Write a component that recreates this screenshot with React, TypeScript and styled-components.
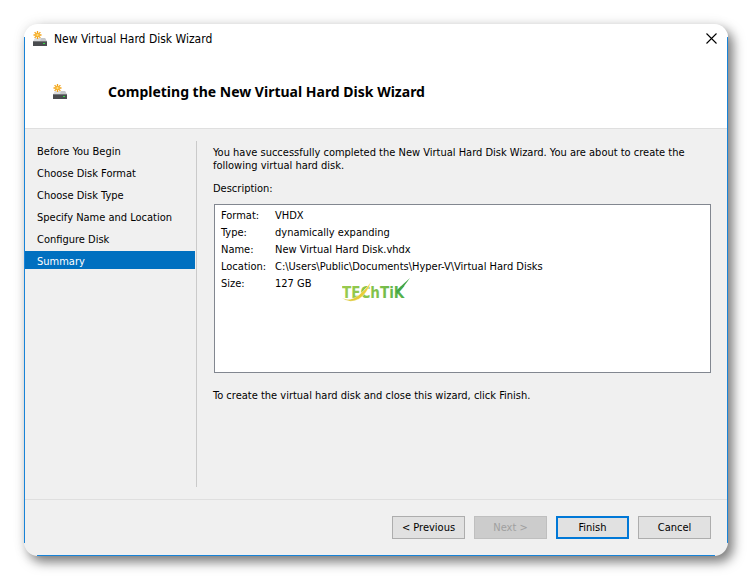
import React from "react";
import styled, { createGlobalStyle, css } from "styled-components";

const GlobalStyle = createGlobalStyle`
  *, *::before, *::after { box-sizing: border-box; }
  html, body, #root { height: 100%; }
  body {
    margin: 0;
    background: #fff;
    color: #000;
    font: 11px/13px "DejaVu Sans Condensed", "Noto Sans", sans-serif;
  }
`;

const Desktop = styled.div`
  display: flex;
  min-height: 100%;
  padding: 24px;
`;

const edge = css`
  content: "";
  position: absolute;
  pointer-events: none;
`;

const Dialog = styled.main`
  position: relative;
  flex: 1;
  display: flex;
  flex-direction: column;
  padding: 0 1px 1px;
  background: #f0f0f0;
  border-radius: 14px;
  overflow: hidden;
  box-shadow: 5px 6px 12px rgba(0, 0, 0, 0.5), 0 0 14px rgba(0, 0, 0, 0.08);

  &::before {
    ${edge}
    inset: 13px 0;
    border: solid #1883d7;
    border-width: 0 1px;
  }
  &::after {
    ${edge}
    inset: auto 13px 0;
    height: 1px;
    background: #1883d7;
  }
`;

const Header = styled.header`
  margin: 0 -1px;
  padding: 0 1px;
  background: #fff;
  border-bottom: 1px solid #dfdfdf;
`;

const TitleBar = styled.div`
  display: flex;
  align-items: center;
  gap: 6px;
  height: 30px;
  padding: 0 8px;
  font-size: 12px;
  line-height: 16px;
`;

const CloseButton = styled.button`
  display: flex;
  margin-left: auto;
  padding: 2px 2px 4px;
  border: 0;
  background: none;
`;

const Banner = styled.div`
  display: flex;
  align-items: center;
  gap: 40px;
  height: 74px;
  padding: 2px 28px 0;
`;

const Heading = styled.h1`
  margin: 0;
  font: bold 14px/18px "Noto Sans", "Open Sans", sans-serif;
`;

const Body = styled.div`
  flex: 1;
  display: flex;
  padding: 12px 16px 12px 0;
`;

const Steps = styled.nav`
  width: 172px;
  flex: none;
  display: flex;
  flex-direction: column;
  gap: 4px;
  padding-right: 1px;
  border-right: 1px solid #cacaca;
`;

const Step = styled.a<{ $current?: boolean }>`
  padding: 4px 12px 0;
  line-height: 14px;
  white-space: nowrap;
  text-decoration: none;
  color: ${(p) => (p.$current ? "#fff" : "#000")};
  background: ${(p) => (p.$current ? "#0070c0" : "transparent")};
`;

const Content = styled.section`
  flex: 1;
  padding: 5px 0 0 16px;
`;

const Text = styled.p`
  margin: 0 0 10px;
`;

const SummaryLabel = styled.div`
  margin-bottom: 9px;
`;

const Summary = styled.div`
  position: relative;
  height: 169px;
  margin: 0 0 16px 1px;
  padding: 2px 6px;
  background: #fff;
  border: 1px solid #828790;
`;

const Details = styled.dl`
  display: grid;
  grid-template-columns: 54px 1fr;
  margin: 0;
  line-height: 17px;
`;

const Term = styled.dt``;

const Value = styled.dd`
  margin: 0;
`;

const Watermark = styled.svg`
  position: absolute;
  left: 127px;
  top: 73px;
`;

const Footer = styled.footer`
  display: flex;
  justify-content: flex-end;
  gap: 9px;
  padding: 16px;
  border-top: 1px solid #dfdfdf;
`;

const Button = styled.button<{ $primary?: boolean }>`
  width: 73px;
  height: 23px;
  padding: 0;
  font: inherit;
  color: #000;
  background: #e1e1e1;
  border: ${(p) => (p.$primary ? "2px solid #0078d7" : "1px solid #adadad")};

  &:disabled {
    color: #a0a0a0;
    background: #ccc;
    border-color: #bfbfbf;
  }
`;

function DiskIcon() {
  return (
    <svg width="15" height="17" viewBox="0 1 15 17" aria-hidden="true">
      <path d="M2 8H12L14 11.5H0Z" fill="#dcdddf" />
      <path d="M8 8H12L14 11.5H7Z" fill="#c6c8cb" />
      <rect x="0" y="11" width="14" height="5" rx="0.6" fill="#4a4c4f" />
      <rect x="0" y="11" width="14" height="1" fill="#77797c" />
      <rect x="10" y="13" width="2" height="1" fill="#35e045" />
      <path d="M4.5 1V9M0.5 5H8.5M1.6 2.1L7.4 7.9M7.4 2.1L1.6 7.9" stroke="#f2a31b" strokeWidth="1.3" />
      <circle cx="4.5" cy="5" r="2" fill="#f7b632" />
      <circle cx="4.5" cy="5" r="1" fill="#ffe08a" />
    </svg>
  );
}

const LogoText = styled.text`
  font: bold 15px "DejaVu Sans Condensed", sans-serif;
`;

function Logo() {
  return (
    <Watermark width="70" height="27" viewBox="0 0 70 27" role="img" aria-label="TechTiK">
      <defs>
        <linearGradient id="leaf" x1="0" x2="1">
          <stop offset="0" stopColor="#9acb4e" />
          <stop offset="0.6" stopColor="#7fc04a" />
          <stop offset="1" stopColor="#4fae4a" />
        </linearGradient>
        <linearGradient id="gold" x1="0" x2="1">
          <stop offset="0" stopColor="#d3c22c" />
          <stop offset="1" stopColor="#f3d33e" />
        </linearGradient>
      </defs>
      <LogoText x="0" y="20" fill="url(#leaf)">TEChTiK</LogoText>
      <path d="M54 13Q60 7 68 0Q62 9 55 16Z" fill="#44a648" />
      <path d="M0 20Q8 24 17 17Q24 11 29 4Q25 16 17 21Q7 26 0 20Z" fill="url(#gold)" stroke="#fff" strokeWidth="0.4" />
    </Watermark>
  );
}

const steps = ["Before You Begin", "Choose Disk Format", "Choose Disk Type", "Specify Name and Location", "Configure Disk", "Summary"];

const details = [
  ["Format:", "VHDX"],
  ["Type:", "dynamically expanding"],
  ["Name:", "New Virtual Hard Disk.vhdx"],
  ["Location:", "C:\\Users\\Public\\Documents\\Hyper-V\\Virtual Hard Disks"],
  ["Size:", "127 GB"],
];

export default function App() {
  return (
    <>
      <GlobalStyle />
      <Desktop>
        <Dialog>
          <Header>
            <TitleBar>
              <DiskIcon />
              <span>New Virtual Hard Disk Wizard</span>
              <CloseButton aria-label="Close">
                <svg width="11" height="11" viewBox="0 0 11 11">
                  <path d="M0.5 0.5L10.5 10.5M10.5 0.5L0.5 10.5" stroke="#000" strokeWidth="1.1" />
                </svg>
              </CloseButton>
            </TitleBar>
            <Banner>
              <DiskIcon />
              <Heading>Completing the New Virtual Hard Disk Wizard</Heading>
            </Banner>
          </Header>
          <Body>
            <Steps>
              {steps.map((step) => (
                <Step key={step} href="#" $current={step === "Summary"} aria-current={step === "Summary" ? "step" : undefined}>
                  {step}
                </Step>
              ))}
            </Steps>
            <Content>
              <Text>
                You have successfully completed the New Virtual Hard Disk Wizard. You are about to create the following virtual hard disk.
              </Text>
              <SummaryLabel id="description">Description:</SummaryLabel>
              <Summary role="group" aria-labelledby="description">
                <Details>
                  {details.map(([term, value]) => (
                    <React.Fragment key={term}>
                      <Term>{term}</Term>
                      <Value>{value}</Value>
                    </React.Fragment>
                  ))}
                </Details>
                <Logo />
              </Summary>
              <Text>To create the virtual hard disk and close this wizard, click Finish.</Text>
            </Content>
          </Body>
          <Footer>
            <Button>&lt; Previous</Button>
            <Button disabled>Next &gt;</Button>
            <Button $primary>Finish</Button>
            <Button>Cancel</Button>
          </Footer>
        </Dialog>
      </Desktop>
    </>
  );
}
